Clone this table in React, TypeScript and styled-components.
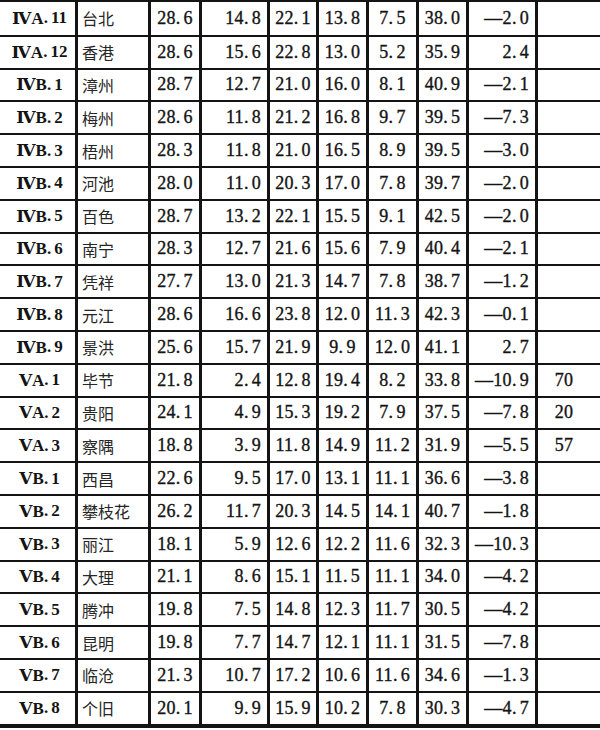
import React from 'react';
import styled, { createGlobalStyle } from 'styled-components';

const GlobalStyle = createGlobalStyle`
  html, body {
    margin: 0;
    padding: 0;
    background: #ffffff;
  }
`;

const COLUMNS = '78px 73px 51px 68px 49px 50px 50px 50px 69px 1fr';
const INK = '#141414';

const Sheet = styled.div`
  width: 600px;
  border-top: 2px solid ${INK};
  border-bottom: 4px solid ${INK};
  color: ${INK};
`;

const Row = styled.div`
  display: grid;
  grid-template-columns: ${COLUMNS};
  height: 32.8px;
  box-sizing: border-box;
  & + & {
    border-top: 2px solid ${INK};
  }
`;

type Align = 'center' | 'right' | 'left';

const Cell = styled.div<{ $align: Align; $last?: boolean }>`
  display: flex;
  align-items: center;
  justify-content: ${(p) =>
    p.$align === 'center' ? 'center' : p.$align === 'right' ? 'flex-end' : 'flex-start'};
  padding: ${(p) => (p.$align === 'right' ? '0 6px 0 0' : p.$align === 'left' ? '0 0 0 4px' : '0')};
  border-right: ${(p) => (p.$last ? 'none' : `3px solid ${INK}`)};
  box-sizing: border-box;
  overflow: hidden;
  white-space: nowrap;
`;

const Label = styled(Cell)`
  font-family: 'Liberation Serif', 'DejaVu Serif', serif;
  font-weight: 700;
  font-size: 17px;
  padding-left: 4px;
`;

const Name = styled(Cell)`
  font-family: 'Noto Sans CJK SC', sans-serif;
  font-size: 16px;
  font-weight: 400;
  color: #262626;
`;

const Num = styled(Cell)`
  font-family: 'Liberation Serif', 'DejaVu Serif', serif;
  font-size: 18px;
  letter-spacing: 0.3px;
  -webkit-text-stroke: 0.35px ${INK};
`;

const Extra = styled(Num)`
  padding-right: 10px;
`;

// the period in the source type sits with a gap after it
const Dot = styled.span`
  margin-right: 3px;
`;

const Figure = ({ value }: { value: string }) => {
  const i = value.indexOf('.');
  if (i < 0) return <>{value}</>;
  return (
    <>
      {value.slice(0, i)}
      <Dot>.</Dot>
      {value.slice(i + 1)}
    </>
  );
};

type Station = [string, string, string, string, string, string, string, string, string, string];

const stations: Station[] = [
  ['ⅣA.11', '台北', '28.6', '14.8', '22.1', '13.8', '7.5', '38.0', '—2.0', ''],
  ['ⅣA.12', '香港', '28.6', '15.6', '22.8', '13.0', '5.2', '35.9', '2.4', ''],
  ['ⅣB.1', '漳州', '28.7', '12.7', '21.0', '16.0', '8.1', '40.9', '—2.1', ''],
  ['ⅣB.2', '梅州', '28.6', '11.8', '21.2', '16.8', '9.7', '39.5', '—7.3', ''],
  ['ⅣB.3', '梧州', '28.3', '11.8', '21.0', '16.5', '8.9', '39.5', '—3.0', ''],
  ['ⅣB.4', '河池', '28.0', '11.0', '20.3', '17.0', '7.8', '39.7', '—2.0', ''],
  ['ⅣB.5', '百色', '28.7', '13.2', '22.1', '15.5', '9.1', '42.5', '—2.0', ''],
  ['ⅣB.6', '南宁', '28.3', '12.7', '21.6', '15.6', '7.9', '40.4', '—2.1', ''],
  ['ⅣB.7', '凭祥', '27.7', '13.0', '21.3', '14.7', '7.8', '38.7', '—1.2', ''],
  ['ⅣB.8', '元江', '28.6', '16.6', '23.8', '12.0', '11.3', '42.3', '—0.1', ''],
  ['ⅣB.9', '景洪', '25.6', '15.7', '21.9', '9.9', '12.0', '41.1', '2.7', ''],
  ['ⅤA.1', '毕节', '21.8', '2.4', '12.8', '19.4', '8.2', '33.8', '—10.9', '70'],
  ['ⅤA.2', '贵阳', '24.1', '4.9', '15.3', '19.2', '7.9', '37.5', '—7.8', '20'],
  ['ⅤA.3', '察隅', '18.8', '3.9', '11.8', '14.9', '11.2', '31.9', '—5.5', '57'],
  ['ⅤB.1', '西昌', '22.6', '9.5', '17.0', '13.1', '11.1', '36.6', '—3.8', ''],
  ['ⅤB.2', '攀枝花', '26.2', '11.7', '20.3', '14.5', '14.1', '40.7', '—1.8', ''],
  ['ⅤB.3', '丽江', '18.1', '5.9', '12.6', '12.2', '11.6', '32.3', '—10.3', ''],
  ['ⅤB.4', '大理', '21.1', '8.6', '15.1', '11.5', '11.1', '34.0', '—4.2', ''],
  ['ⅤB.5', '腾冲', '19.8', '7.5', '14.8', '12.3', '11.7', '30.5', '—4.2', ''],
  ['ⅤB.6', '昆明', '19.8', '7.7', '14.7', '12.1', '11.1', '31.5', '—7.8', ''],
  ['ⅤB.7', '临沧', '21.3', '10.7', '17.2', '10.6', '11.6', '34.6', '—1.3', ''],
  ['ⅤB.8', '个旧', '20.1', '9.9', '15.9', '10.2', '7.8', '30.3', '—4.7', ''],
];

// alignment of the numeric columns 3..9
const numAlign: Align[] = ['center', 'right', 'center', 'center', 'center', 'center', 'right'];

const App = () => (
  <>
    <GlobalStyle />
    <Sheet>
      {stations.map((s) => (
        <Row key={s[0]}>
          <Label $align="center">
            <Figure value={s[0]} />
          </Label>
          <Name $align="left">{s[1]}</Name>
          {s.slice(2, 9).map((v, i) => (
            <Num key={i} $align={numAlign[i]}>
              <Figure value={v} />
            </Num>
          ))}
          <Extra $align="center" $last>
            {s[9]}
          </Extra>
        </Row>
      ))}
    </Sheet>
  </>
);

export default App;
